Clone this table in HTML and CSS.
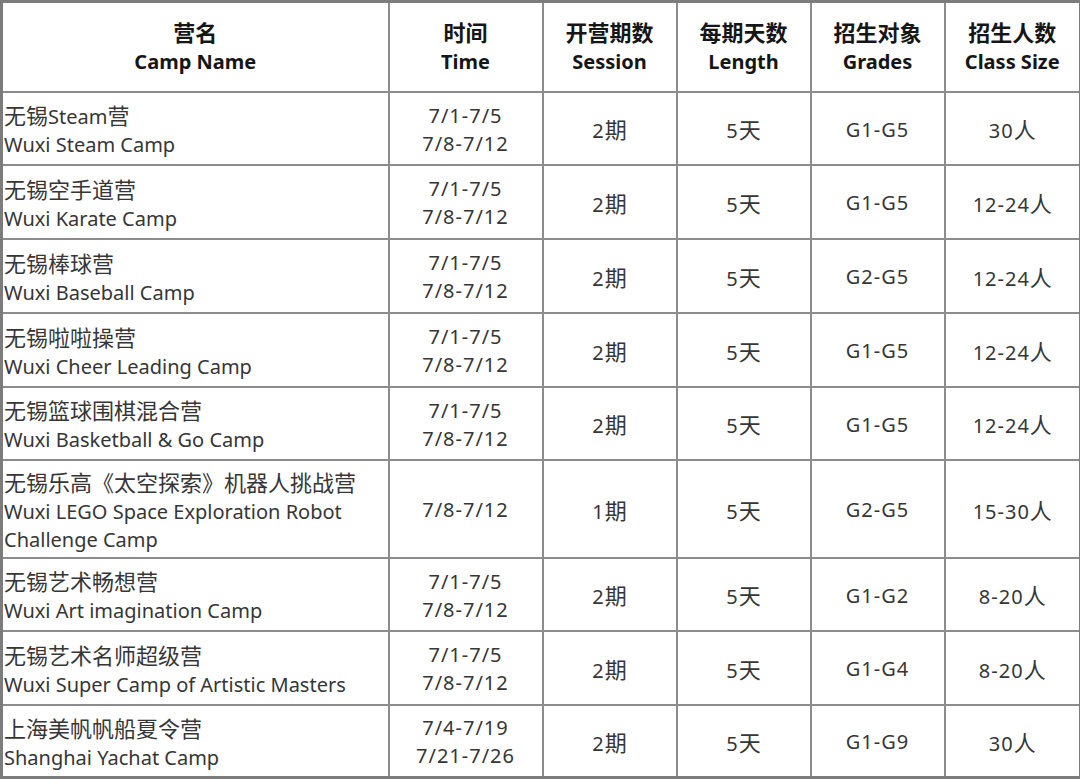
FILE: index.html
```html
<!DOCTYPE html>
<html lang="zh">
<head>
<meta charset="utf-8">
<link rel="stylesheet" href="styles.css">
</head>
<body>
<table class="camps">
  <colgroup>
    <col class="c-name"><col class="c-time"><col class="c-num"><col class="c-num"><col class="c-num"><col class="c-last">
  </colgroup>
  <thead>
    <tr class="head">
      <th><span class="zh">营名</span><br>Camp Name</th>
      <th><span class="zh">时间</span><br>Time</th>
      <th><span class="zh">开营期数</span><br>Session</th>
      <th><span class="zh">每期天数</span><br>Length</th>
      <th><span class="zh">招生对象</span><br>Grades</th>
      <th><span class="zh">招生人数</span><br>Class Size</th>
    </tr>
  </thead>
  <tbody>
    <tr class="r73">
      <td class="name"><span class="zh">无锡</span>Steam<span class="zh">营</span><br>Wuxi Steam Camp</td>
      <td class="n">7/1-7/5<br>7/8-7/12</td><td class="n">2<span class="zh">期</span></td><td class="n">5<span class="zh">天</span></td><td class="n">G1-G5</td><td class="n">30<span class="zh">人</span></td>
    </tr>
    <tr class="r74">
      <td class="name"><span class="zh">无锡空手道营</span><br>Wuxi Karate Camp</td>
      <td class="n">7/1-7/5<br>7/8-7/12</td><td class="n">2<span class="zh">期</span></td><td class="n">5<span class="zh">天</span></td><td class="n">G1-G5</td><td class="n">12-24<span class="zh">人</span></td>
    </tr>
    <tr class="r74">
      <td class="name"><span class="zh">无锡棒球营</span><br>Wuxi Baseball Camp</td>
      <td class="n">7/1-7/5<br>7/8-7/12</td><td class="n">2<span class="zh">期</span></td><td class="n">5<span class="zh">天</span></td><td class="n">G2-G5</td><td class="n">12-24<span class="zh">人</span></td>
    </tr>
    <tr class="r74">
      <td class="name"><span class="zh">无锡啦啦操营</span><br>Wuxi Cheer Leading Camp</td>
      <td class="n">7/1-7/5<br>7/8-7/12</td><td class="n">2<span class="zh">期</span></td><td class="n">5<span class="zh">天</span></td><td class="n">G1-G5</td><td class="n">12-24<span class="zh">人</span></td>
    </tr>
    <tr class="r73">
      <td class="name"><span class="zh">无锡篮球围棋混合营</span><br>Wuxi Basketball &amp; Go Camp</td>
      <td class="n">7/1-7/5<br>7/8-7/12</td><td class="n">2<span class="zh">期</span></td><td class="n">5<span class="zh">天</span></td><td class="n">G1-G5</td><td class="n">12-24<span class="zh">人</span></td>
    </tr>
    <tr class="r98">
      <td class="name"><span class="zh">无锡乐高《太空探索》机器人挑战营</span><br>Wuxi LEGO Space Exploration Robot<br>Challenge Camp</td>
      <td class="n">7/8-7/12</td><td class="n">1<span class="zh">期</span></td><td class="n">5<span class="zh">天</span></td><td class="n">G2-G5</td><td class="n">15-30<span class="zh">人</span></td>
    </tr>
    <tr class="r73">
      <td class="name"><span class="zh">无锡艺术畅想营</span><br>Wuxi Art imagination Camp</td>
      <td class="n">7/1-7/5<br>7/8-7/12</td><td class="n">2<span class="zh">期</span></td><td class="n">5<span class="zh">天</span></td><td class="n">G1-G2</td><td class="n">8-20<span class="zh">人</span></td>
    </tr>
    <tr class="r74">
      <td class="name"><span class="zh">无锡艺术名师超级营</span><br>Wuxi Super Camp of Artistic Masters</td>
      <td class="n">7/1-7/5<br>7/8-7/12</td><td class="n">2<span class="zh">期</span></td><td class="n">5<span class="zh">天</span></td><td class="n">G1-G4</td><td class="n">8-20<span class="zh">人</span></td>
    </tr>
    <tr class="r73">
      <td class="name"><span class="zh">上海美帆帆船夏令营</span><br>Shanghai Yachat Camp</td>
      <td class="n">7/4-7/19<br>7/21-7/26</td><td class="n">2<span class="zh">期</span></td><td class="n">5<span class="zh">天</span></td><td class="n">G1-G9</td><td class="n">30<span class="zh">人</span></td>
    </tr>
  </tbody>
</table>
</body>
</html>
```
FILE: styles.css
```css
html, body {
  margin: 0;
  padding: 0;
  background: #ffffff;
}
.camps {
  width: 1080px;
  border-collapse: collapse;
  table-layout: fixed;
  font-family: "Noto Sans", "Noto Sans CJK SC", sans-serif;
  border: 3px solid #7c7c7c;
}
.c-name { width: 387px; }
.c-time { width: 154px; }
.c-num { width: 134px; }
.c-last { width: 136px; }
.camps th, .camps td {
  border: 2px solid #8c8c8c;
  text-align: center;
  vertical-align: middle;
  padding: 0 2px;
}
.camps th {
  font-size: 20px;
  font-weight: bold;
  line-height: 28px;
  color: #161616;
}
.camps td {
  font-size: 20px;
  line-height: 28px;
  color: #363636;
  padding-top: 3px;
}
.camps td.name {
  text-align: left;
  padding-left: 1px;
}
.camps td.n {
  letter-spacing: 1px;
}
.zh {
  font-family: "Noto Sans CJK SC", sans-serif;
  font-size: 22px;
  letter-spacing: 0;
}
.head { height: 90px; }
.r73 { height: 73px; }
.r74 { height: 74px; }
.r98 { height: 98px; }
```
